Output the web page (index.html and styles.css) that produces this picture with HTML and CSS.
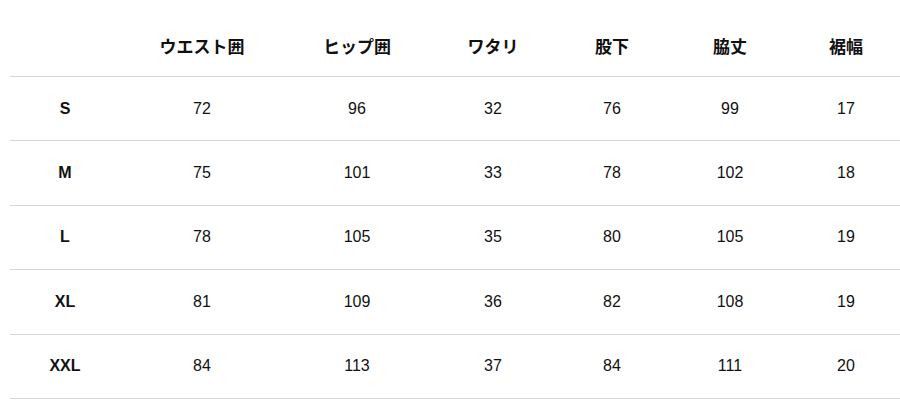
FILE: index.html
```html
<!DOCTYPE html>
<html lang="ja">
<head>
<meta charset="utf-8">
<link rel="stylesheet" href="styles.css">
</head>
<body>
<table class="size-table">
  <colgroup>
    <col class="c1"><col class="c2"><col class="c3"><col class="c4"><col class="c5"><col class="c6"><col class="c7">
  </colgroup>
  <thead>
    <tr><th></th><th>ウエスト囲</th><th>ヒップ囲</th><th>ワタリ</th><th>股下</th><th>脇丈</th><th>裾幅</th></tr>
  </thead>
  <tbody>
    <tr><th>S</th><td>72</td><td>96</td><td>32</td><td>76</td><td>99</td><td>17</td></tr>
    <tr><th>M</th><td>75</td><td>101</td><td>33</td><td>78</td><td>102</td><td>18</td></tr>
    <tr><th>L</th><td>78</td><td>105</td><td>35</td><td>80</td><td>105</td><td>19</td></tr>
    <tr><th>XL</th><td>81</td><td>109</td><td>36</td><td>82</td><td>108</td><td>19</td></tr>
    <tr><th>XXL</th><td>84</td><td>113</td><td>37</td><td>84</td><td>111</td><td>20</td></tr>
  </tbody>
</table>
</body>
</html>
```
FILE: styles.css
```css
html, body {
  margin: 0;
  padding: 0;
  background: #fff;
}
body {
  padding: 15px 0 0 10px;
  font-family: "Liberation Sans", "Noto Sans CJK JP", sans-serif;
  color: #111;
}
.size-table {
  width: 890px;
  border-collapse: collapse;
  table-layout: fixed;
}
.c1 { width: 110px; }
.c2 { width: 164px; }
.c3 { width: 146px; }
.c4 { width: 126px; }
.c5 { width: 112px; }
.c6 { width: 124px; }
.c7 { width: 108px; }
.size-table th,
.size-table td {
  text-align: center;
  padding: 0;
  height: 63.4px;
  border-bottom: 1px solid #d4d4d4;
  font-size: 16px;
}
.size-table th {
  font-weight: bold;
}
.size-table thead th {
  height: 61px;
  font-size: 17px;
}
.size-table td {
  font-weight: normal;
}
```
